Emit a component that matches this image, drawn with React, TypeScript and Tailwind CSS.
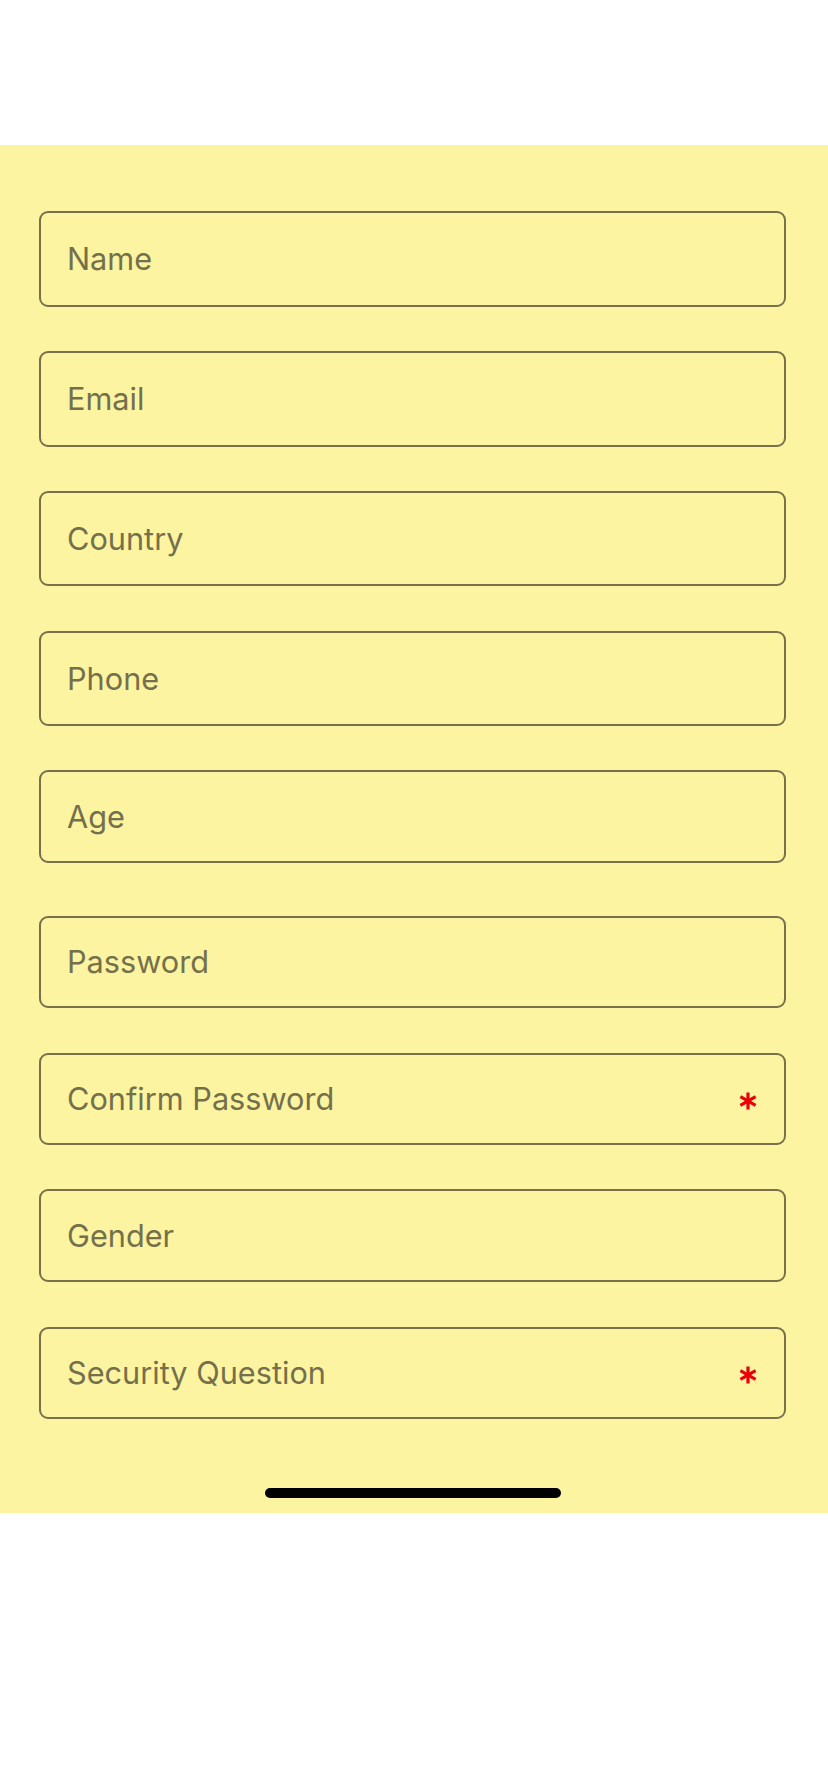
import React from 'react';

type Field = {
  label: string;
  height: string;
  gap: string;
  required?: boolean;
};

// heights and top gaps taken from the screenshot
const fields: Field[] = [
  { label: 'Name', height: 'h-[96px]', gap: 'mt-[66px]' },
  { label: 'Email', height: 'h-[96px]', gap: 'mt-[44px]' },
  { label: 'Country', height: 'h-[95px]', gap: 'mt-[44px]' },
  { label: 'Phone', height: 'h-[95px]', gap: 'mt-[45px]' },
  { label: 'Age', height: 'h-[93px]', gap: 'mt-[44px]' },
  { label: 'Password', height: 'h-[92px]', gap: 'mt-[53px]' },
  { label: 'Confirm Password', height: 'h-[92px]', gap: 'mt-[45px]', required: true },
  { label: 'Gender', height: 'h-[93px]', gap: 'mt-[44px]' },
  { label: 'Security Question', height: 'h-[92px]', gap: 'mt-[45px]', required: true },
];

const Asterisk = () => (
  <svg width="18" height="18" viewBox="0 0 18 18" className="shrink-0">
    <g stroke="#e8000b" strokeWidth="3.2" strokeLinecap="butt">
      <line x1="9" y1="0.5" x2="9" y2="17.5" />
      <line x1="1.4" y1="4.7" x2="16.6" y2="13.3" />
      <line x1="1.4" y1="13.3" x2="16.6" y2="4.7" />
    </g>
  </svg>
);

const FormField = ({ field }: { field: Field }) => (
  <div
    className={`${field.height} ${field.gap} flex items-center justify-between rounded-[9px] border-[2.5px] border-[#76714b] pl-[26px] pr-[27px]`}
  >
    <span
      className="text-[30.7px] leading-none pt-[1px] text-[#74704b]"
      style={{ fontFamily: 'Inter, "Liberation Sans", sans-serif' }}
    >
      {field.label}
    </span>
    {field.required && (
      <div className="mt-[3px]">
        <Asterisk />
      </div>
    )}
  </div>
);

export default function App() {
  return (
    <div className="w-[828px] h-[1792px] bg-white">
      <div className="h-[145px]" />
      <div className="h-[1368px] bg-[#fdf4a2] pl-[39px] pr-[42px] flex flex-col">
        {fields.map((f) => (
          <FormField key={f.label} field={f} />
        ))}
        <div className="mt-[69px] flex justify-center">
          <div className="w-[296px] h-[10px] rounded-full bg-black ml-[1px]" />
        </div>
      </div>
    </div>
  );
}
